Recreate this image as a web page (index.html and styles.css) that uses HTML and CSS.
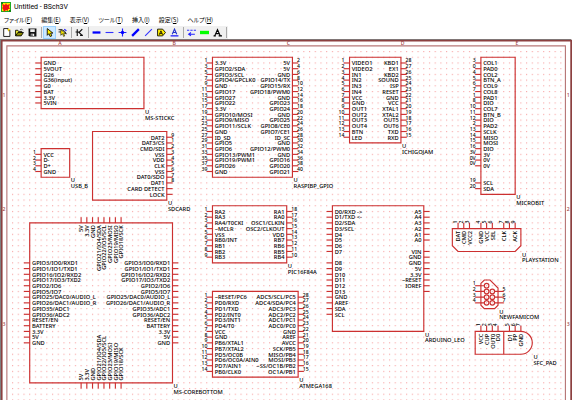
FILE: index.html
```html
<!DOCTYPE html>
<html lang="ja">
    <head>
        <meta charset="UTF-8">
        <meta name="viewport" content="width=device-width, initial-scale=1.0">
        <title>Untitled - BSch3V</title>
        <link rel="stylesheet" href="styles.css">
    </head>
    <body>
        <header class="titlebar">
            <svg class="appicon" viewBox="0 0 10 10">
                <rect width="10" height="10" fill="#2a2"/>
                <path d="M1 1h8v8h-8z" fill="#fe0"/>
                <path d="M1 2l3 1l1-2l1 2l3-1l-1 3l1 2l-2 0l0 2l-2-1l-2 2l-1-3l-1-1l1-1z" fill="#e11"/>
                <path d="M0 0h2v2h-2zM8 8h2v2h-2z" fill="#181"/>
            </svg>
            <h1>Untitled - BSch3V</h1>
        </header>
        <nav class="menubar">
            <a href="#">ファイル(<u>F</u>)</a>
            <a href="#">編集(<u>E</u>)</a>
            <a href="#">表示(<u>V</u>)</a>
            <a href="#">ツール(<u>T</u>)</a>
            <a href="#">挿入(<u>I</u>)</a>
            <a href="#">設定(<u>S</u>)</a>
            <a href="#">ヘルプ(<u>H</u>)</a>
        </nav>
        <div class="toolbar">
            <button aria-label="New"><svg viewBox="0 0 16 16"><path d="M3 1h8v3h3v11H3z" fill="#fff" stroke="#000" stroke-width="1.5"/><path d="M12 0l1 2 3 1-3 1-1 3-1-3-2-1 2-1z" fill="#fd0"/></svg></button>
            <button aria-label="Open"><svg viewBox="0 0 16 16"><path d="M1 14V4h4l1 2h6v3" fill="#ee3" stroke="#000" stroke-width="1.5"/><path d="M1 14l4-6h10l-4 6z" fill="#880" stroke="#000" stroke-width="1.5"/><path d="M9 3q3-3 5 1" fill="none" stroke="#000"/></svg></button>
            <button aria-label="Save"><svg viewBox="0 0 16 16"><path d="M1 1h14v14H3l-2-2z" fill="#111"/><path d="M4 2h8v5H4zM5 10h6v4H5z" fill="#eee"/><path d="M6 11h2v3H6z" fill="#111"/></svg></button>
            <span class="sep"></span>
            <button class="active" aria-label="Select"><svg viewBox="0 0 16 16"><path d="M4 1v12l3-3 2 5 3-1-2-5h4z" fill="#fe0" stroke="#000" stroke-width="1.5"/></svg></button>
            <button aria-label="Drag"><svg viewBox="0 0 16 16"><path d="M1 3h6l5 3 3 5M1 7h5" fill="none" stroke="#000" stroke-width="1.5"/><path d="M5 3v10l3-3 2 5 2-1-2-4h4z" fill="#fe0" stroke="#000"/><path d="M11 2l4 3" stroke="#22f" stroke-width="2"/></svg></button>
            <span class="sep"></span>
            <button aria-label="Component"><svg viewBox="0 0 16 16"><path d="M4 2v12M1 7h6M13 2L7 8l6 5M9 13h5" fill="none" stroke="#111" stroke-width="2"/></svg></button>
            <span class="sep"></span>
            <button aria-label="Bus"><svg viewBox="0 0 16 16"><path d="M1 8h14" stroke="#00f" stroke-width="4"/></svg></button>
            <button aria-label="Wire"><svg viewBox="0 0 16 16"><path d="M1 8h14" stroke="#33f" stroke-width="2"/></svg></button>
            <button aria-label="Junction"><svg viewBox="0 0 16 16"><path d="M1 8h14M8 1v14" stroke="#22f" stroke-width="2"/><circle cx="8" cy="8" r="3" fill="#00f"/></svg></button>
            <button aria-label="Bus entry"><svg viewBox="0 0 16 16"><path d="M2 14L14 2" stroke="#00f" stroke-width="4"/></svg></button>
            <button aria-label="Entry"><svg viewBox="0 0 16 16"><path d="M2 14L14 2" stroke="#33f" stroke-width="2"/></svg></button>
            <button aria-label="Tag"><svg viewBox="0 0 16 16"><path d="M1 2h9l5 6-5 6H1z" fill="#fe0" stroke="#000" stroke-width="1.5"/><path d="M4 12l3-7 3 7M5 10h4" fill="none" stroke="#000" stroke-width="1.5"/></svg></button>
            <button aria-label="Label"><svg viewBox="0 0 16 16"><path d="M4 11l4-9 4 9M5 8h6" fill="none" stroke="#23c" stroke-width="2"/><path d="M1 14h14" stroke="#00f" stroke-width="2"/></svg></button>
            <span class="sep"></span>
            <button aria-label="Dashed line"><svg viewBox="0 0 16 16"><path d="M0 4h16" stroke="#33f" stroke-width="2" stroke-dasharray="4 2"/><path d="M4 11h10M7 8l-4 3 4 3" fill="none" stroke="#22f" stroke-width="2"/></svg></button>
            <button aria-label="Marker"><svg viewBox="0 0 16 16"><path d="M0 8h16" stroke="#0f0" stroke-width="6"/></svg></button>
            <button aria-label="Comment"><svg viewBox="0 0 16 16"><path d="M3 14L8 3l5 11M5 10h6M1 14h4M10 14h6" fill="none" stroke="#000" stroke-width="2"/></svg></button>
            <span class="sep"></span>
        </div>
        <main class="workspace">
            <svg id="sheet" class="sheet" viewBox="0 68 1026 632" role="img" aria-label="Schematic sheet">
                <defs>
                    <pattern id="grid" x="1" y="9" width="10" height="10" patternUnits="userSpaceOnUse">
                        <rect width="2" height="2" class="dot"/>
                    </pattern>
                </defs>
                <path class="desk" d="M0 68H1000V70H2V700H0z"/>
                <rect x="15" y="85" width="970" height="640" fill="url(#grid)"/>
                <path class="frame outer" d="M3 710V71H1000V710"/>
                <path class="frame" d="M12 710V80H990V710"/>
            </svg>
        </main>
        <script src="sheet.js"></script>
    </body>
</html>
```
FILE: styles.css
```css
* {
    box-sizing: border-box;
}
body {
    margin: 0;
    background-color: #fff;
    font-family: Roboto, "Noto Sans CJK JP", sans-serif;
    color: #000;
    overflow: hidden;
}
.titlebar {
    display: flex;
    align-items: center;
    gap: 3px;
    height: 14px;
    padding: 0 1px;
}
.titlebar h1 {
    margin: 0;
    font-size: 7px;
    font-weight: 400;
    line-height: 10px;
}
.appicon {
    width: 10px;
    height: 10px;
}
.menubar {
    display: flex;
    align-items: center;
    gap: 9px;
    height: 12px;
    padding: 0 4px;
}
.menubar a {
    color: #000;
    font-family: "Noto Sans CJK JP", sans-serif;
    font-size: 6px;
    font-feature-settings: "palt";
    line-height: 10px;
    text-decoration: none;
    white-space: nowrap;
}
.toolbar {
    display: flex;
    align-items: center;
    width: fit-content;
    height: 13px;
    background-color: #f0f0f0;
}
.toolbar button {
    display: flex;
    align-items: center;
    justify-content: center;
    width: 13px;
    height: 13px;
    padding: 0;
    border: 1px solid transparent;
    background: none;
}
.toolbar button.active {
    border-color: #99d1ff;
    background-color: #cce8ff;
}
.toolbar svg {
    flex: none;
    width: 9px;
    height: 9px;
}
.sep {
    width: 1px;
    height: 11px;
    margin: 0 1px 0 2px;
    background-color: #aaa;
}
.sheet {
    display: block;
    width: 100%;
}
.desk {
    fill: #7c8888;
}
.dot {
    fill: #f8a8a8;
}
.frame {
    fill: none;
    stroke: #b87878;
    stroke-width: 2px;
}
.frame.outer {
    stroke: #8c4040;
    stroke-width: 3px;
}
.part, .pin {
    fill: none;
    stroke: #cc3030;
    stroke-width: 2px;
}
.sheet text {
    font-family: "Noto Sans", sans-serif;
    font-size: 10px;
    font-weight: 500;
    fill: #000;
}
.sheet .num {
    font-size: 9px;
}
.sheet .zone {
    fill: #a04040;
    font-size: 9px;
    text-anchor: middle;
}
.sheet .end {
    text-anchor: end;
}
```
FILE: sheet.js
```js
const sheet = document.querySelector('#sheet');

function add(tag, attrs, text) {
    const el = document.createElementNS('http://www.w3.org/2000/svg', tag);
    for (const key in attrs) el.setAttribute(key, attrs[key]);
    if (text) el.textContent = text;
    sheet.appendChild(el);
}

function label(attrs, text) {
    if (text && text.trim()) add('text', attrs, text);
}

function vtext(x, y, cls, text) {
    label({ transform: `translate(${x} ${y}) rotate(-90)`, class: cls }, text);
}

// a pin is "name" or "name:number", an empty string leaves the slot free
function drawPin(part, side, i, pin) {
    if (!pin) return;
    const [name, num] = pin.split(':');
    const { x, y, w, h } = part;
    const py = y + 10 + i * 10;
    const px = x + part.offset + i * 10;
    if (side === 'left') {
        add('path', { class: 'pin', d: `M${x - 10} ${py}H${x}` });
        label({ x: x + 4, y: py + 4 }, name);
        label({ x: x - 9, y: py - 1, class: 'num end' }, num);
    } else if (side === 'right') {
        add('path', { class: 'pin', d: `M${x + w} ${py}h10` });
        label({ x: x + w - 4, y: py + 4, class: 'end' }, name);
        label({ x: x + w + 8, y: py - 1, class: 'num' }, num);
    } else if (side === 'top') {
        add('path', { class: 'pin', d: `M${px} ${y - 10}V${y}` });
        vtext(px + 4, y + 4, 'end', name);
        vtext(px - 1, y - 9, 'num', num);
    } else {
        add('path', { class: 'pin', d: `M${px} ${y + h}v10` });
        vtext(px + 4, y + h - 4, '', name);
    }
}

const coreSide = 'GPIO3/IO0/RXD1 GPIO1/IO1/TXD1 GPIO16/IO2/RXD2 GPIO17/IO3/TXD2 GPIO2/IO6 GPIO5/IO7 GPIO25/DAC0/AUDIO_L GPIO26/DAC1/AUDIO_R GPIO35/ADC1 GPIO36/ADC2 RESET/EN BATTERY 3.3V 5V GND'.split(' ');
const coreBus = '5V 3.3V GND GPIO21/IO4/SDA GPIO22/IO5/SCL GPIO23/MOSI GPIO19/MISO GPIO18/SCK'.split(' ');
const gap = n => Array(n).fill('');
const number = (names, from, step) => names.split(' ').map((n, i) => `${n}:${from + i * step}`);

const parts = [
    { name: 'MS-STICKC', x: 72, y: 100, w: 180, h: 90,
      left: 'GND 5VOUT G26 G36(input) G0 BAT 3.3V 5VIN'.split(' ') },
    { name: 'USB_B', x: 72, y: 260, w: 50, h: 50,
      left: number('VCC D- D+ GND', 1, 1) },
    { name: 'SDCARD', x: 162, y: 230, w: 130, h: 120,
      right: ['DAT2:9', 'DAT3/CS:1', 'CMD/SDI:2', 'VSS:3', 'VDD:4', 'CLK:5', 'VSS:6', 'DAT0/SDO:7', 'DAT1:8', 'CARD DETECT', 'LOCK'] },
    { name: 'MS-COREBOTTOM', x: 52, y: 390, w: 250, h: 280, offset: 90,
      left: gap(6).concat(coreSide), right: gap(6).concat(coreSide), top: coreBus, bottom: coreBus },
    { name: 'RASPIBP_GPIO', x: 372, y: 100, w: 140, h: 210,
      left: number('3.3V GPIO2/SDA GPIO3/SCL GPIO4/GPCLK0 GND GPIO17 GPIO27 GPIO22 3.3V GPIO10/MOSI GPIO9/MISO GPIO11/SCLK GND ID_SD GPIO5 GPIO6 GPIO13/PWM1 GPIO19/PWM1 GPIO26 GND', 1, 2),
      right: number('5V 5V GND GPIO14/TX GPIO15/RX GPIO18/PWM0 GND GPIO23 GPIO24 GND GPIO25 GPIO8/CE0 GPIO7/CE1 ID_SC GND GPIO12/PWM0 GND GPIO16 GPIO20 GPIO21', 2, 2) },
    { name: 'ICHIGOJAM', x: 612, y: 100, w: 90, h: 150,
      left: number('VIDEO1 VIDEO2 IN1 IN2 IN3 IN4 VCC GND OUT1 OUT2 OUT3 OUT4 BTN LED', 1, 1),
      right: number('KBD1 EX1 KBD2 SOUND ISP RESET GND VCC XTAL1 XTAL2 OUT5 OUT6 TXD RXD', 28, -1) },
    { name: 'MICROBIT', x: 842, y: 100, w: 60, h: 240,
      left: ['COL1:3', 'PAD0:0', 'COL2:4', 'BTN_A:5', 'COL9:6', 'COL8:7', 'PAD1:1', 'DIO:8', 'COL7:10', 'BTN_B:11', 'DIO:12', 'PAD2:2', 'SCLK:13', 'MISO:14', 'MOSI:15', 'DIO:16', '3V:3V', '0V:0V', '0V:0V', '', '', 'SCL:19', 'SDA:20'] },
    { name: 'PIC16F84A', x: 372, y: 360, w: 130, h: 100,
      left: number('RA2 RA3 RA4/T0CKI ~MCLR VSS RB0/INT RB1 RB2 RB3', 1, 1),
      right: number('RA1 RA0 OSC1/CLKIN OSC2/CLKOUT VDD RB7 RB6 RB5 RB4', 18, -1) },
    { name: 'ATMEGA168', x: 372, y: 510, w: 150, h: 150,
      left: number('~RESET/PC6 PD0/RXD PD1/TXD PD2/INT0 PD3/INT1 PD4/T0 VCC GND PB6/XTAL1 PB7/XTAL2 PD5/OC0B PD6/OC0A/AIN0 PD7/AIN1 PB0/CLK0', 1, 1),
      right: number('ADC5/SCL/PC5 ADC4/SDA/PC4 ADC3/PC3 ADC2/PC2 ADC1/PC1 ADC0/PC0 GND AREF AVCC SCK/PB5 MISO/PB4 MOSI/PB3 ~SS/OC1B/PB2 OC1A/PB1', 28, -1) },
    { name: 'ARDUINO_LEO', x: 582, y: 360, w: 160, h: 220,
      left: ['D0/RXD ->', 'D1/TXD <-', 'D2/SDA', 'D3/SCL', 'D4', 'D5', 'D6', 'D7', '', 'D8', 'D9', 'D10', 'D11', 'D12', 'D13', 'GND', 'AREF', 'SDA', 'SCL'],
      right: ['A5', 'A4', 'A3', 'A2', 'A1', 'A0', '', 'VIN', 'GND', 'GND', '5V', '3.3V', '~RESET', 'IOREF', ' '] },
    { name: 'PLAYSTATION', x: 792, y: 400, w: 120, h: 40, offset: 10,
      shape: 'M792 400H912V430L902 440H802L792 430z',
      top: ['DAT:1', 'CMD:2', 'VCC2:3', '', 'GND:4', 'VCC:5', 'SEL:6', '', 'CLK:7', ' :8', 'ACK:9'] },
    { name: 'NEWFAMICOM', x: 842, y: 490, w: 30, h: 50,
      shape: 'M842 496L848 490H858L872 504V534L866 540H848L842 534z',
      left: [':1', ':2', ':3', ':4'], right: ['', ':5', ':6', ':7'] },
    { name: 'SFC_PAD', x: 832, y: 580, w: 100, h: 40, offset: 10,
      shape: 'M832 580H912A20 20 0 0 1 912 620H832zM882 580V620',
      top: ['VCC:1', 'CUP:2', 'OUT0:3', 'D0:4', '', 'D1:5', 'PP:6', 'GND:7'] }
];

for (const part of parts) {
    const { x, y, w, h } = part;
    add('path', { class: 'part', d: part.shape || `M${x} ${y}h${w}v${h}h${-w}z` });
    for (const side of ['left', 'right', 'top', 'bottom']) {
        (part[side] || []).forEach((pin, i) => drawPin(part, side, i, pin));
    }
    label({ x: x + w + 2, y: y + h + 9 }, 'U');
    label({ x: x + w + 2, y: y + h + 19 }, part.name);
}

// round contacts of the Famicom plug
for (const [cx, cy] of [[852, 500], [852, 510], [862, 510], [852, 520], [862, 520], [852, 530], [862, 530]]) {
    add('circle', { class: 'part', cx, cy, r: 4 });
}
add('path', { class: 'pin', d: 'M842 500h6M842 510h6M842 520h6M842 530h6M866 510h6M866 520h6M866 530h6' });

// zone marks on the sheet frame
['A', 'B', 'C', 'D', 'E'].forEach((c, i) => label({ x: 105 + i * 200, y: 79, class: 'zone' }, c));
['1', '2', '3'].forEach((c, i) => {
    label({ x: 7, y: 170 + i * 200, class: 'zone' }, c);
    label({ x: 995, y: 170 + i * 200, class: 'zone' }, c);
});
```
